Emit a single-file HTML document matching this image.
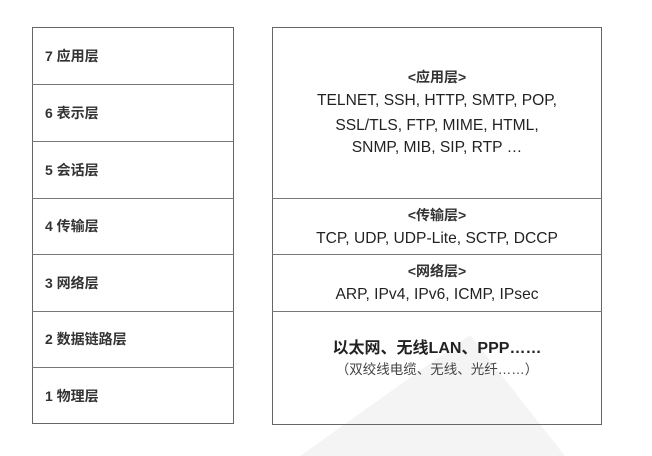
<!DOCTYPE html>
<html><head><meta charset="utf-8"><style>
body{margin:0;width:652px;height:456px;background:#fff;position:relative;overflow:hidden;font-family:"Liberation Sans","Noto Sans CJK SC",sans-serif;color:#222}
.b{position:absolute;border:1px solid #666;box-sizing:border-box}
.h{position:absolute;height:1px;background:#777}
.l{position:absolute;left:45px;font-size:14px;line-height:16px;font-weight:bold;color:#333}
.t{position:absolute;left:272px;width:330px;text-align:center;font-size:15.6px;line-height:17px}
.c{font-weight:bold;font-size:14px;color:#333}
</style></head><body>
<svg style="position:absolute;left:0;top:0" width="652" height="456"><polygon points="300,456 470,335 565,456" fill="#f4f4f4"/></svg>
<div class="b" style="left:32px;top:27px;width:202px;height:397px"></div>
<div class="h" style="left:32px;width:202px;top:84px"></div>
<div class="h" style="left:32px;width:202px;top:141px"></div>
<div class="h" style="left:32px;width:202px;top:198px"></div>
<div class="h" style="left:32px;width:202px;top:254px"></div>
<div class="h" style="left:32px;width:202px;top:311px"></div>
<div class="h" style="left:32px;width:202px;top:367px"></div>
<div class="l" style="top:48px">7 应用层</div>
<div class="l" style="top:105px">6 表示层</div>
<div class="l" style="top:162px">5 会话层</div>
<div class="l" style="top:218px">4 传输层</div>
<div class="l" style="top:275px">3 网络层</div>
<div class="l" style="top:331px">2 数据链路层</div>
<div class="l" style="top:388px">1 物理层</div>
<div class="b" style="left:272px;top:27px;width:330px;height:398px"></div>
<div class="h" style="left:272px;width:330px;top:198px"></div>
<div class="h" style="left:272px;width:330px;top:254px"></div>
<div class="h" style="left:272px;width:330px;top:311px"></div>
<div class="t c" style="top:69px">&lt;应用层&gt;</div>
<div class="t" style="top:92px">TELNET, SSH, HTTP, SMTP, POP,</div>
<div class="t" style="top:117px">SSL/TLS, FTP, MIME, HTML,</div>
<div class="t" style="top:139px">SNMP, MIB, SIP, RTP …</div>
<div class="t c" style="top:207px">&lt;传输层&gt;</div>
<div class="t" style="top:230px">TCP, UDP, UDP-Lite, SCTP, DCCP</div>
<div class="t c" style="top:263px">&lt;网络层&gt;</div>
<div class="t" style="top:286px">ARP, IPv4, IPv6, ICMP, IPsec</div>
<div class="t" style="top:340px;font-weight:bold;font-size:16px">以太网、无线LAN、PPP……</div>
<div class="t" style="top:361px;font-size:13.5px;color:#444">（双绞线电缆、无线、光纤……）</div>
</body></html>
